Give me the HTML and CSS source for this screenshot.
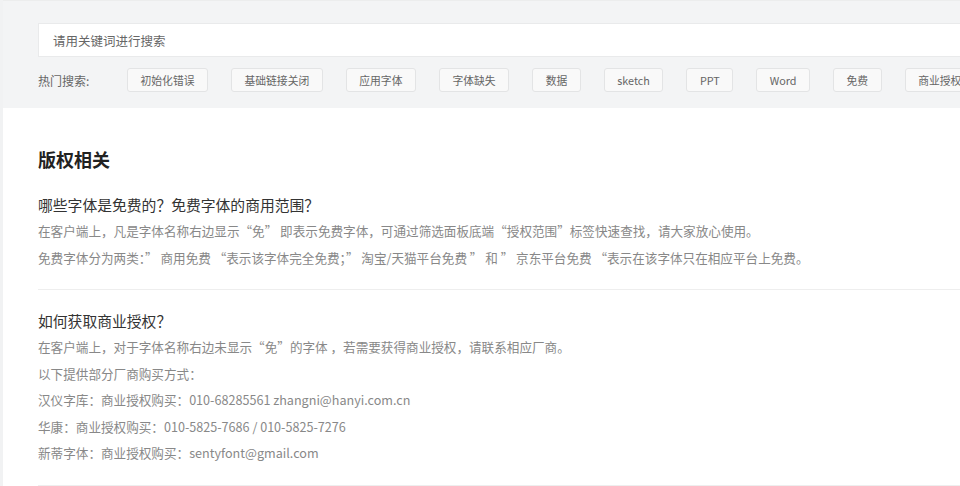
FILE: index.html
```html
<!DOCTYPE html>
<html lang="zh-CN">
<head>
  <meta charset="UTF-8" />
  <meta name="viewport" content="width=device-width, initial-scale=1.0"/>
  <title>版权相关</title>
  <link rel="stylesheet" href="styles.css">
</head>
<body>

<div class="page">
  <!-- 搜索区 -->
  <div class="search-bar">
    <input type="text" class="search-input" placeholder="请用关键词进行搜索" />
    <div class="hot">
      <span class="hot-label">热门搜索:</span>
      <div class="tags">
        <a class="tag">初始化错误</a>
        <a class="tag">基础链接关闭</a>
        <a class="tag">应用字体</a>
        <a class="tag">字体缺失</a>
        <a class="tag">数据</a>
        <a class="tag">sketch</a>
        <a class="tag">PPT</a>
        <a class="tag">Word</a>
        <a class="tag">免费</a>
        <a class="tag">商业授权</a>
      </div>
    </div>
  </div>

  <!-- 问答 -->
  <div class="main">
    <h2>版权相关</h2>

    <div class="faq-item">
      <h3>哪些字体是免费的？免费字体的商用范围？</h3>
      <p>在客户端上，凡是字体名称右边显示“免” 即表示免费字体，可通过筛选面板底端“授权范围”标签快速查找，请大家放心使用。</p>
      <p>免费字体分为两类：” 商用免费 “表示该字体完全免费；” 淘宝/天猫平台免费 ” 和 ” 京东平台免费 “表示在该字体只在相应平台上免费。</p>
    </div>

    <div class="faq-item">
      <h3>如何获取商业授权？</h3>
      <p>在客户端上，对于字体名称右边未显示“免”的字体 ，若需要获得商业授权，请联系相应厂商。</p>
      <p>以下提供部分厂商购买方式：</p>
      <p>汉仪字库：商业授权购买：010-68285561 zhangni@hanyi.com.cn</p>
      <p>华康：商业授权购买：010-5825-7686 / 010-5825-7276</p>
      <p>新蒂字体：商业授权购买：sentyfont@gmail.com</p>
    </div>
  </div>
</div>

</body>
</html>
```

FILE: styles.css
```css
body {
  margin: 0;
  background: #fff;
  font-family: "Noto Sans CJK SC", "Noto Sans", sans-serif;
  overflow: hidden;
}

.page {
  border-left: 3px solid #f1f2f3;
  min-height: 100vh;
}

.search-bar {
  background: #f3f4f5;
  height: 108px;
  box-sizing: border-box;
  padding: 23px 0 0 35px;
  border-top: 1px solid #eceded;
}

.search-input {
  display: block;
  width: 1000px;
  height: 34px;
  box-sizing: border-box;
  margin: -1px 0 0;
  padding: 0 14px;
  border: 1px solid #e9eaeb;
  background: #fff;
  font-family: inherit;
  font-size: 12.5px;
  color: #333;
  outline: none;
}

.search-input::placeholder {
  color: #666;
}

.hot {
  display: flex;
  align-items: center;
  margin-top: 11px;
}

.hot-label {
  width: 89px;
  flex-shrink: 0;
  font-size: 12px;
  color: #666;
}

.tags {
  display: flex;
  gap: 23px;
  flex-wrap: nowrap;
}

.tag {
  flex-shrink: 0;
  height: 24px;
  box-sizing: border-box;
  padding: 0 12.5px;
  line-height: 22px;
  border: 1px solid #e3e4e5;
  border-radius: 3px;
  background: #f9f9f9;
  font-size: 10.8px;
  color: #666;
  cursor: pointer;
}

.main {
  padding: 38px 0 0 35px;
}

h2 {
  margin: 0 0 2px;
  font-size: 18px;
  line-height: 26px;
  font-weight: bold;
  color: #222;
}

.faq-item {
  padding: 18px 0;
  border-bottom: 1px solid #eeeeee;
}

h3 {
  margin: 0;
  font-size: 14.8px;
  line-height: 26px;
  font-weight: normal;
  color: #333;
}

.faq-item p {
  margin: 0;
  font-size: 12.6px;
  line-height: 26.5px;
  color: #888;
}
```
